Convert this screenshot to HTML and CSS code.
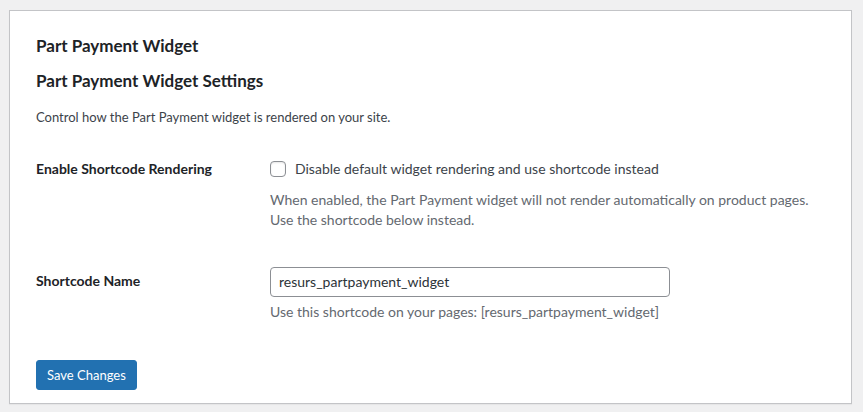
FILE: index.html
```html
<!DOCTYPE html>
<html lang="en">
<head>
<meta charset="utf-8">
<title>Part Payment Widget</title>
<link rel="stylesheet" href="styles.css">
</head>
<body>
<div class="wrap">
  <div class="card">
    <h2 class="title">Part Payment Widget</h2>
    <h2 class="subtitle">Part Payment Widget Settings</h2>
    <p class="intro">Control how the Part Payment widget is rendered on your site.</p>
    <div class="form-table">
      <div class="row row-first">
        <div class="th">Enable Shortcode Rendering</div>
        <div class="td">
          <label class="check"><span class="box"></span><span>Disable default widget rendering and use shortcode instead</span></label>
          <p class="description desc-block">When enabled, the Part Payment widget will not render automatically on product pages.<br>Use the shortcode below instead.</p>
        </div>
      </div>
      <div class="row row-second">
        <div class="th th-input">Shortcode Name</div>
        <div class="td">
          <div class="input">resurs_partpayment_widget</div>
          <p class="description help">Use this shortcode on your pages: [resurs_partpayment_widget]</p>
        </div>
      </div>
    </div>
    <div class="submit"><button class="button-primary" type="button">Save Changes</button></div>
  </div>
</div>
</body>
</html>
```
FILE: styles.css
```css
* { box-sizing: border-box; }
html, body { margin: 0; padding: 0; }
body {
  background: #f0f0f1;
  font-family: Lato, "Noto Sans", sans-serif;
  color: #3c434a;
  width: 863px;
  height: 412px;
  overflow: hidden;
}
.wrap {
  padding: 10px 11px 0 9px;
}
.card {
  background: #fff;
  border: 1px solid #c3c4c7;
  box-shadow: 0 1px 1px rgba(0,0,0,0.04);
  height: 394px;
  padding: 24px 26px 0 26px;
}
.title, .subtitle {
  margin: 0;
  font-size: 17px;
  line-height: 22px;
  font-weight: 700;
  color: #1d2327;
}
.subtitle { margin-top: 13px; }
.intro {
  margin: 15px 0 0;
  font-size: 13px;
  line-height: 20px;
  color: #3c434a;
}
.form-table { margin-top: 32px; }
.row {
  display: grid;
  grid-template-columns: 234px 1fr;
}
.row-second { margin-top: 37px; }
.th {
  font-size: 14px;
  line-height: 20px;
  font-weight: 700;
  color: #1d2327;
}
.th-input { padding-top: 4px; }
.td { font-size: 14px; line-height: 20px; }
.check {
  display: flex;
  align-items: center;
  gap: 9px;
  color: #3c434a;
}
.box {
  width: 16px;
  height: 16px;
  border: 1px solid #8c8f94;
  border-radius: 4px;
  background: #fff;
  box-shadow: inset 0 1px 2px rgba(0,0,0,0.1);
  flex: none;
}
.description {
  margin: 0;
  color: #646970;
}
.desc-block { margin-top: 11px; }
.input {
  width: 400px;
  height: 30px;
  border: 1px solid #8c8f94;
  border-radius: 4px;
  padding: 0 8px;
  line-height: 28px;
  color: #2c3338;
  background: #fff;
}
.help { margin-top: 5px; }
.submit { margin-top: 38px; }
.button-primary {
  font-family: inherit;
  font-size: 13px;
  height: 30px;
  padding: 0 10px;
  background: #2271b1;
  border: 1px solid #2271b1;
  border-radius: 3px;
  color: #fff;
  cursor: pointer;
}
```
